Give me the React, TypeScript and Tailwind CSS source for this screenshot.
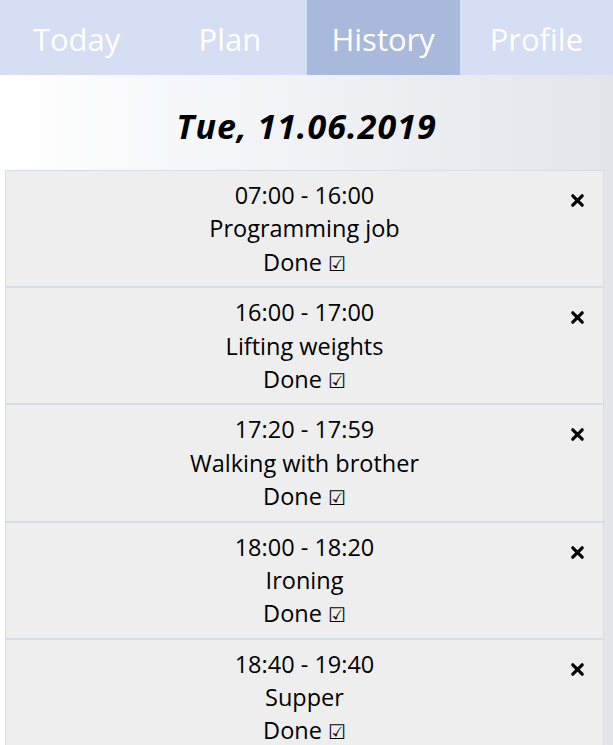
import React from "react";

const tabs = ["Today", "Plan", "History", "Profile"];
const items = [
  { time: "07:00 - 16:00", name: "Programming job" },
  { time: "16:00 - 17:00", name: "Lifting weights" },
  { time: "17:20 - 17:59", name: "Walking with brother" },
  { time: "18:00 - 18:20", name: "Ironing" },
  { time: "18:40 - 19:40", name: "Supper" },
];

function XIcon() {
  return (
    <svg width="15" height="15" viewBox="0 0 15 15" className="block">
      <path d="M2.8 2.8 L12.2 12.2 M12.2 2.8 L2.8 12.2" stroke="#000" strokeWidth="3.2" strokeLinecap="round" />
    </svg>
  );
}

export default function App() {
  return (
    <div
      className="min-h-screen w-full bg-gradient-to-r from-white to-[#e3e5eb] text-black"
      style={{ fontFamily: '"Comic Sans MS", "Open Sans", "DejaVu Sans", sans-serif' }}
    >
      <nav className="grid h-[75px] grid-cols-4 bg-[#d5def2]">
        {tabs.map((t) => (
          <div
            key={t}
            className={
              "flex items-center justify-center pt-[3px] text-[31px] text-white " +
              (t === "History" ? "bg-[#a9b9dc]" : "")
            }
          >
            {t}
          </div>
        ))}
      </nav>
      <div className="flex h-[95px] items-center justify-center pt-[8px]">
        <h2 className="text-[34px] font-bold italic tracking-[1px]">Tue, 11.06.2019</h2>
      </div>
      <div className="ml-[5px] mr-[9px] flex flex-col">
        {items.map((it) => (
          <div
            key={it.time}
            className="relative border border-[#d6dcea] bg-[#eeeeee] pt-[8px] pb-[7px] text-center text-[23.5px] leading-[33.4px]"
          >
            <div className="h-[33.4px]">{it.time}</div>
            <div className="h-[33.4px]">{it.name}</div>
            <div className="h-[33.4px]">
              Done{" "}
              <span
                style={{ fontFamily: '"DejaVu Sans", sans-serif' }}
                className="inline-block align-baseline text-[20px] leading-none"
              >
                ☑
              </span>
            </div>
            <div className="absolute right-[18px] top-[22px]">
              <XIcon />
            </div>
          </div>
        ))}
      </div>
    </div>
  );
}
